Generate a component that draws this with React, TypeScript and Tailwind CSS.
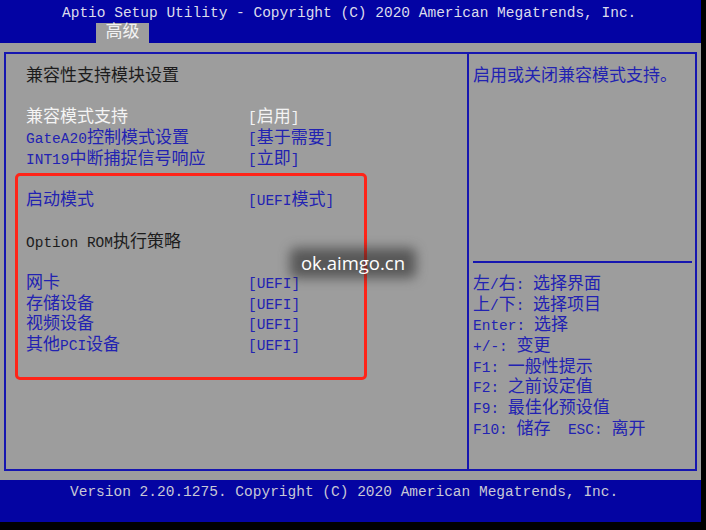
import React from "react";

const CJK = /([\u2E80-\u9FFF\u3000-\u303F\uFF00-\uFFEF]+)/;

// mixes a narrow mono latin with double-width CJK, like the BIOS font
const Txt = ({ s }: { s: string }) => (
  <>
    {s.split(CJK).map((part, i) =>
      part === "" ? null : CJK.test(part) ? (
        <span key={i} className="text-[17px]">
          {part}
        </span>
      ) : (
        <span key={i} className="text-[14.5px] whitespace-pre">
          {part}
        </span>
      )
    )}
  </>
);

type Row = { label?: string; value?: string; tone?: "dark" | "white" | "blue" };

const rows: Row[] = [
  { label: "兼容性支持模块设置", tone: "dark" },
  {},
  { label: "兼容模式支持", value: "[启用]", tone: "white" },
  { label: "GateA20控制模式设置", value: "[基于需要]", tone: "blue" },
  { label: "INT19中断捕捉信号响应", value: "[立即]", tone: "blue" },
  {},
  { label: "启动模式", value: "[UEFI模式]", tone: "blue" },
  {},
  { label: "Option ROM执行策略", tone: "dark" },
  {},
  { label: "网卡", value: "[UEFI]", tone: "blue" },
  { label: "存储设备", value: "[UEFI]", tone: "blue" },
  { label: "视频设备", value: "[UEFI]", tone: "blue" },
  { label: "其他PCI设备", value: "[UEFI]", tone: "blue" },
];

const keys = [
  "左/右: 选择界面",
  "上/下: 选择项目",
  "Enter: 选择",
  "+/-: 变更",
  "F1: 一般性提示",
  "F2: 之前设定值",
  "F9: 最佳化预设值",
  "F10: 储存  ESC: 离开",
];

const toneClass = {
  dark: "text-[#1c1c1c]",
  white: "text-[#f4f4f4]",
  blue: "text-[#2222b2]",
};

export default function App() {
  return (
    <div
      className="relative w-[706px] h-[530px] bg-black overflow-hidden"
      style={{ fontFamily: '"Liberation Mono", "Noto Sans CJK SC", monospace' }}
    >
      <div className="w-[701px] h-[522px] flex flex-col">
        {/* header */}
        <div className="h-[43px] bg-[#0303a3] flex flex-col">
          <div className="pt-[3px] pl-[62px] leading-[20px] text-[#dcdcec]">
            <Txt s="Aptio Setup Utility - Copyright (C) 2020 American Megatrends, Inc." />
          </div>
          <div className="ml-[96px] w-[53px] h-[20px] bg-[#9d9d9d] text-[#f2f2f2] leading-[20px] text-center">
            <Txt s="高级" />
          </div>
        </div>

        {/* body */}
        <div className="flex-1 bg-[#9d9d9d] pt-[9px] pl-[4px]">
          <div className="w-[693px] h-[419px] border-2 border-[#1616b0] flex">
            <div className="w-[463px] border-r-2 border-[#1616b0] pt-[13px] pl-[20px]">
              {rows.map((r, i) => (
                <div key={i} className={`flex h-[20.7px] leading-[20.7px] ${r.tone ? toneClass[r.tone] : ""}`}>
                  <div className="w-[222px] whitespace-nowrap">{r.label && <Txt s={r.label} />}</div>
                  <div className="whitespace-nowrap">{r.value && <Txt s={r.value} />}</div>
                </div>
              ))}
            </div>
            <div className="flex-1 flex flex-col pt-[13px] text-[#2222b2]">
              <div className="h-[194px] pl-[4px] leading-[20.7px]">
                <Txt s="启用或关闭兼容模式支持。" />
              </div>
              <div className="h-[2px] ml-[4px] mr-[3px] bg-[#1616b0]" />
              <div className="pt-[12px] pl-[4px]">
                {keys.map((k) => (
                  <div key={k} className="h-[20.7px] leading-[20.7px] whitespace-nowrap">
                    <Txt s={k} />
                  </div>
                ))}
              </div>
            </div>
          </div>
        </div>

        {/* footer */}
        <div className="h-[42px] bg-[#0404a2] pt-[2px] pl-[70px] leading-[20px] text-[#c8c8d6]">
          <Txt s="Version 2.20.1275. Copyright (C) 2020 American Megatrends, Inc." />
        </div>
      </div>

      {/* red annotation */}
      <div className="absolute left-[15px] top-[173px] w-[352px] h-[207px] border-[3px] border-[#ff2418] rounded-[5px]" />

      {/* watermark */}
      <div className="absolute left-[290px] top-[248px] w-[126px] h-[30px]">
        <div className="absolute inset-0 bg-[#2a2a2a]/60 blur-[6px] rounded-md" />
        <div
          className="relative text-center text-white text-[18.5px] leading-[30px]"
          style={{ fontFamily: '"Open Sans", sans-serif' }}
        >
          ok.aimgo.cn
        </div>
      </div>
    </div>
  );
}
